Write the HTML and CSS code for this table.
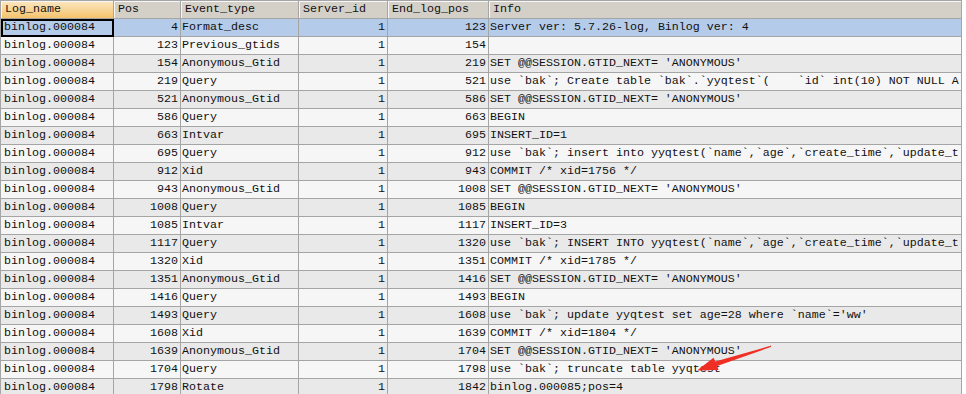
FILE: index.html
```html
<!DOCTYPE html>
<html lang="en">
<head>
    <meta charset="UTF-8">
    <title>binlog events</title>
    <link rel="stylesheet" href="styles.css">
</head>
<body>
    <table class="grid">
        <thead>
            <tr>
                <th class="c1 sorted">Log_name</th>
                <th class="c2">Pos</th>
                <th class="c3">Event_type</th>
                <th class="c4">Server_id</th>
                <th class="c5">End_log_pos</th>
                <th class="c6">Info</th>
            </tr>
        </thead>
        <tbody>
            <tr class="selected"><td class="focus">binlog.000084</td><td class="num">4</td><td>Format_desc</td><td class="num">1</td><td class="num">123</td><td>Server ver: 5.7.26-log, Binlog ver: 4</td></tr>
            <tr><td>binlog.000084</td><td class="num">123</td><td>Previous_gtids</td><td class="num">1</td><td class="num">154</td><td></td></tr>
            <tr><td>binlog.000084</td><td class="num">154</td><td>Anonymous_Gtid</td><td class="num">1</td><td class="num">219</td><td>SET @@SESSION.GTID_NEXT= 'ANONYMOUS'</td></tr>
            <tr><td>binlog.000084</td><td class="num">219</td><td>Query</td><td class="num">1</td><td class="num">521</td><td>use `bak`; Create table `bak`.`yyqtest`(    `id` int(10) NOT NULL A</td></tr>
            <tr><td>binlog.000084</td><td class="num">521</td><td>Anonymous_Gtid</td><td class="num">1</td><td class="num">586</td><td>SET @@SESSION.GTID_NEXT= 'ANONYMOUS'</td></tr>
            <tr><td>binlog.000084</td><td class="num">586</td><td>Query</td><td class="num">1</td><td class="num">663</td><td>BEGIN</td></tr>
            <tr><td>binlog.000084</td><td class="num">663</td><td>Intvar</td><td class="num">1</td><td class="num">695</td><td>INSERT_ID=1</td></tr>
            <tr><td>binlog.000084</td><td class="num">695</td><td>Query</td><td class="num">1</td><td class="num">912</td><td>use `bak`; insert into yyqtest(`name`,`age`,`create_time`,`update_t</td></tr>
            <tr><td>binlog.000084</td><td class="num">912</td><td>Xid</td><td class="num">1</td><td class="num">943</td><td>COMMIT /* xid=1756 */</td></tr>
            <tr><td>binlog.000084</td><td class="num">943</td><td>Anonymous_Gtid</td><td class="num">1</td><td class="num">1008</td><td>SET @@SESSION.GTID_NEXT= 'ANONYMOUS'</td></tr>
            <tr><td>binlog.000084</td><td class="num">1008</td><td>Query</td><td class="num">1</td><td class="num">1085</td><td>BEGIN</td></tr>
            <tr><td>binlog.000084</td><td class="num">1085</td><td>Intvar</td><td class="num">1</td><td class="num">1117</td><td>INSERT_ID=3</td></tr>
            <tr><td>binlog.000084</td><td class="num">1117</td><td>Query</td><td class="num">1</td><td class="num">1320</td><td>use `bak`; INSERT INTO yyqtest(`name`,`age`,`create_time`,`update_t</td></tr>
            <tr><td>binlog.000084</td><td class="num">1320</td><td>Xid</td><td class="num">1</td><td class="num">1351</td><td>COMMIT /* xid=1785 */</td></tr>
            <tr><td>binlog.000084</td><td class="num">1351</td><td>Anonymous_Gtid</td><td class="num">1</td><td class="num">1416</td><td>SET @@SESSION.GTID_NEXT= 'ANONYMOUS'</td></tr>
            <tr><td>binlog.000084</td><td class="num">1416</td><td>Query</td><td class="num">1</td><td class="num">1493</td><td>BEGIN</td></tr>
            <tr><td>binlog.000084</td><td class="num">1493</td><td>Query</td><td class="num">1</td><td class="num">1608</td><td>use `bak`; update yyqtest set age=28 where `name`='ww'</td></tr>
            <tr><td>binlog.000084</td><td class="num">1608</td><td>Xid</td><td class="num">1</td><td class="num">1639</td><td>COMMIT /* xid=1804 */</td></tr>
            <tr><td>binlog.000084</td><td class="num">1639</td><td>Anonymous_Gtid</td><td class="num">1</td><td class="num">1704</td><td>SET @@SESSION.GTID_NEXT= 'ANONYMOUS'</td></tr>
            <tr><td>binlog.000084</td><td class="num">1704</td><td>Query</td><td class="num">1</td><td class="num">1798</td><td>use `bak`; truncate table yyqtest</td></tr>
            <tr><td>binlog.000084</td><td class="num">1798</td><td>Rotate</td><td class="num">1</td><td class="num">1842</td><td>binlog.000085;pos=4</td></tr>
        </tbody>
    </table>

    <!-- red marker arrow pasted on the screenshot -->
    <svg class="marker" width="966" height="394" viewBox="0 0 966 394">
        <polygon fill="#ef2f24" points="771.2,345.6 770.8,347.0 717.2,366.0 718.5,370.0 697,370.5 713.5,357.8 715.3,361.6"/>
    </svg>
</body>
</html>
```

FILE: styles.css
```css
body {
    margin: 0;
    background-color: #ffffff;
    font-family: "Liberation Mono", "DejaVu Sans Mono", monospace;
    font-size: 11.67px;
    color: #111;
    overflow: hidden;
}

.grid {
    table-layout: fixed;
    border-collapse: separate;
    border-spacing: 0;
    width: 962px;
    border-top: 1px solid #a5a5a5;
    border-left: 1px solid #a5a5a5;
}

.grid th,
.grid td {
    box-sizing: border-box;
    height: 18px;
    line-height: 17px;
    padding: 0 2px 0 1px;
    border-right: 1px solid #a5a5a5;
    border-bottom: 1px solid #a5a5a5;
    white-space: pre;
    overflow: hidden;
    text-align: left;
}

.c1 { width: 113px; }
.c2 { width: 67px; }
.c3 { width: 118px; }
.c4 { width: 89px; }
.c5 { width: 101px; }
.c6 { width: 473px; }

/* header */
.grid th {
    font-weight: normal;
    padding-left: 4px;
    background-color: #d4d0c8;
    box-shadow: inset 1px 1px 0 #f7f7f7;
}

.grid th.sorted {
    background: linear-gradient(#fbe7c2, #f5c46c);
}

/* rows */
.grid tbody tr:nth-child(odd) td {
    background-color: #e9e9e9;
}

.grid tbody tr:nth-child(even) td {
    background-color: #f6f6f6;
}

.grid tbody tr.selected td {
    background-color: #b4cbea;
}

.grid td:first-child {
    padding-left: 3px;
}

.grid td.num {
    text-align: right;
}

.grid td.focus {
    outline: 2px solid #000;
    outline-offset: -2px;
}

.marker {
    position: absolute;
    left: 0;
    top: 0;
    pointer-events: none;
}
```
